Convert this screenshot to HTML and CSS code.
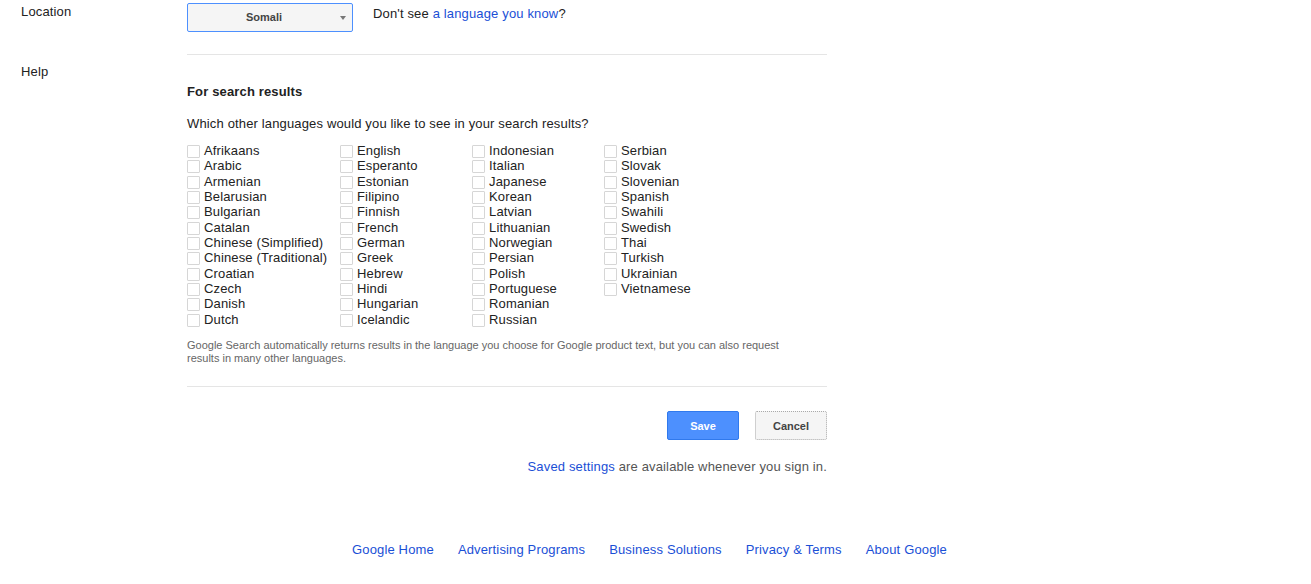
FILE: index.html
```html
<!DOCTYPE html>
<html lang="en">
<head>
    <meta charset="UTF-8">
    <title>Search Settings</title>
    <link rel="stylesheet" href="styles.css">
</head>
<body>
    <div class="row row-location">
        <div class="side">Location</div>
        <div class="main">
            <div class="lang-line">
                <div class="select">
                    <span>Somali</span>
                    <span class="arrow"></span>
                </div>
                <span class="dont">Don't see <a href="#">a language you know</a>?</span>
            </div>
        </div>
    </div>

    <div class="row row-help">
        <div class="side side-help">Help</div>
        <div class="main main-help">
            <h3>For search results</h3>
            <p class="question">Which other languages would you like to see in your search results?</p>

            <div class="langs">
                <div class="col col1">
                    <label><span class="box"></span>Afrikaans</label>
                    <label><span class="box"></span>Arabic</label>
                    <label><span class="box"></span>Armenian</label>
                    <label><span class="box"></span>Belarusian</label>
                    <label><span class="box"></span>Bulgarian</label>
                    <label><span class="box"></span>Catalan</label>
                    <label><span class="box"></span>Chinese (Simplified)</label>
                    <label><span class="box"></span>Chinese (Traditional)</label>
                    <label><span class="box"></span>Croatian</label>
                    <label><span class="box"></span>Czech</label>
                    <label><span class="box"></span>Danish</label>
                    <label><span class="box"></span>Dutch</label>
                </div>
                <div class="col col2">
                    <label><span class="box"></span>English</label>
                    <label><span class="box"></span>Esperanto</label>
                    <label><span class="box"></span>Estonian</label>
                    <label><span class="box"></span>Filipino</label>
                    <label><span class="box"></span>Finnish</label>
                    <label><span class="box"></span>French</label>
                    <label><span class="box"></span>German</label>
                    <label><span class="box"></span>Greek</label>
                    <label><span class="box"></span>Hebrew</label>
                    <label><span class="box"></span>Hindi</label>
                    <label><span class="box"></span>Hungarian</label>
                    <label><span class="box"></span>Icelandic</label>
                </div>
                <div class="col col3">
                    <label><span class="box"></span>Indonesian</label>
                    <label><span class="box"></span>Italian</label>
                    <label><span class="box"></span>Japanese</label>
                    <label><span class="box"></span>Korean</label>
                    <label><span class="box"></span>Latvian</label>
                    <label><span class="box"></span>Lithuanian</label>
                    <label><span class="box"></span>Norwegian</label>
                    <label><span class="box"></span>Persian</label>
                    <label><span class="box"></span>Polish</label>
                    <label><span class="box"></span>Portuguese</label>
                    <label><span class="box"></span>Romanian</label>
                    <label><span class="box"></span>Russian</label>
                </div>
                <div class="col col4">
                    <label><span class="box"></span>Serbian</label>
                    <label><span class="box"></span>Slovak</label>
                    <label><span class="box"></span>Slovenian</label>
                    <label><span class="box"></span>Spanish</label>
                    <label><span class="box"></span>Swahili</label>
                    <label><span class="box"></span>Swedish</label>
                    <label><span class="box"></span>Thai</label>
                    <label><span class="box"></span>Turkish</label>
                    <label><span class="box"></span>Ukrainian</label>
                    <label><span class="box"></span>Vietnamese</label>
                </div>
            </div>

            <p class="note">Google Search automatically returns results in the language you choose for Google product text, but you can also request results in many other languages.</p>

            <div class="divider"></div>

            <div class="buttons">
                <button class="btn btn-save">Save</button>
                <button class="btn btn-cancel">Cancel</button>
            </div>

            <p class="saved"><a href="#">Saved settings</a> are available whenever you sign in.</p>
        </div>
    </div>

    <div class="footer">
        <a href="#">Google Home</a>
        <a href="#">Advertising Programs</a>
        <a href="#">Business Solutions</a>
        <a href="#">Privacy &amp; Terms</a>
        <a href="#">About Google</a>
    </div>
</body>
</html>
```

FILE: styles.css
```css
body {
    margin: 0;
    font-family: "Liberation Sans", Arial, sans-serif;
    font-size: 13px;
    letter-spacing: 0.15px;
    color: #222;
    background: #fff;
}
a {
    color: #1a4fd6;
    text-decoration: none;
}
.row {
    display: flex;
}
.side {
    width: 166px;
    padding-left: 21px;
    line-height: 16px;
}
.main {
    width: 640px;
}
.row-location {
    padding-top: 3px;
}
.row-location .side {
    padding-top: 1px;
}
.lang-line {
    display: flex;
    align-items: flex-start;
    padding-bottom: 22px;
    border-bottom: 1px solid #e5e5e5;
}
.select {
    position: relative;
    box-sizing: border-box;
    width: 166px;
    height: 29px;
    padding-right: 12px;
    background: #f5f5f5;
    border: 1px solid #4d90fe;
    border-radius: 2px;
    font-size: 11px;
    font-weight: bold;
    letter-spacing: 0;
    color: #444;
    text-align: center;
    line-height: 27px;
}
.arrow {
    position: absolute;
    right: 6px;
    top: 12px;
    border-left: 3.5px solid transparent;
    border-right: 3.5px solid transparent;
    border-top: 4px solid #777;
}
.dont {
    margin-left: 20px;
    line-height: 16px;
    padding-top: 3px;
}
.side-help {
    padding-top: 9px;
}
.main-help {
    padding-top: 29px;
}
h3 {
    margin: 0;
    font-size: 13px;
    line-height: 16px;
    font-weight: bold;
}
.question {
    margin: 16px 0 0;
    line-height: 16px;
}
.langs {
    display: flex;
    margin-top: 10.7px;
}
.col {
    display: grid;
    grid-auto-rows: 15.36px;
    align-content: start;
}
.col1 {
    width: 153px;
}
.col2,
.col3 {
    width: 132px;
}
.col label {
    display: flex;
    align-items: center;
    line-height: 15px;
}
.box {
    box-sizing: border-box;
    width: 13px;
    height: 13px;
    margin-right: 4px;
    margin-top: 2px;
    border: 1px solid #d6d6d6;
    border-radius: 1px;
    background: #fff;
}
.note {
    margin: 12px 0 0;
    font-size: 11px;
    letter-spacing: 0;
    line-height: 13px;
    color: #666;
    padding-right: 40px;
}
.divider {
    margin-top: 21px;
    border-top: 1px solid #e5e5e5;
}
.buttons {
    display: flex;
    justify-content: flex-end;
    gap: 16px;
    margin-top: 24px;
}
.btn {
    box-sizing: border-box;
    width: 72px;
    height: 29px;
    font-family: "Liberation Sans", Arial, sans-serif;
    font-size: 11px;
    font-weight: bold;
    border-radius: 2px;
    padding: 0;
}
.btn-save {
    background: #4d90fe;
    border: 1px solid #3079ed;
    color: #fff;
}
.btn-cancel {
    background: #f5f5f5;
    border: 1px dotted #aaa;
    color: #444;
}
.saved {
    margin: 19px 0 0;
    text-align: right;
    line-height: 16px;
    color: #555;
}
.footer {
    display: flex;
    justify-content: center;
    gap: 24px;
    margin-top: 67px;
    padding-right: 12px;
    line-height: 16px;
}
```
